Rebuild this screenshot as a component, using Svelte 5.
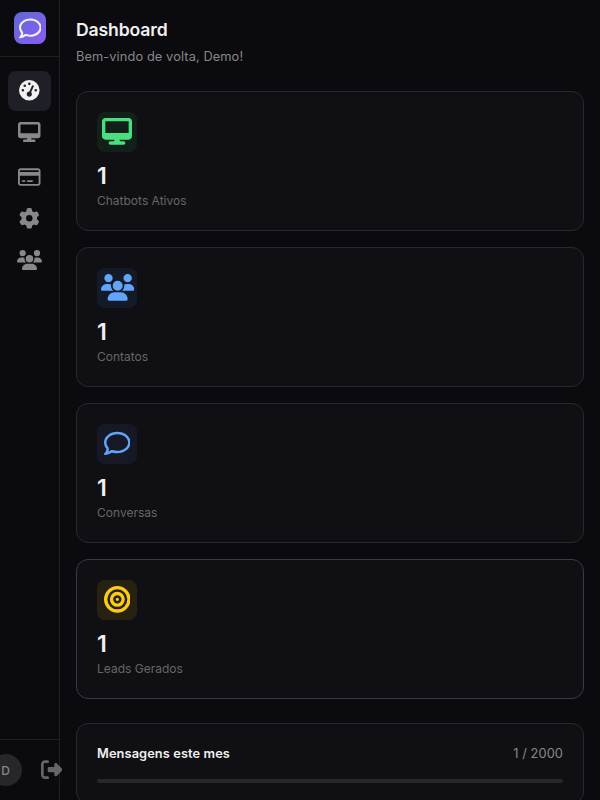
<script>
  const icons = {
    comment: [512, 'M123.6 391.3c12.9-9.4 29.6-11.8 44.6-6.4c26.5 9.6 56.2 15.1 87.8 15.1c124.7 0 208-80.5 208-160s-83.3-160-208-160S48 160.5 48 240c0 32 12.4 62.8 35.7 89.2c8.6 9.7 12.8 22.5 11.8 35.5c-1.4 18.1-5.7 34.7-11.3 49.4c17-7.9 31.1-16.7 39.4-22.7zM21.2 431.9c1.8-2.7 3.5-5.4 5.1-8.1c10-16.6 19.5-38.4 21.4-62.9C17.7 326.8 0 285.1 0 240C0 125.1 114.6 32 256 32s256 93.1 256 208s-114.6 208-256 208c-37.1 0-72.3-6.4-104.1-17.9c-11.9 8.7-31.3 20.6-54.3 30.6c-15.1 6.6-32.3 12.6-50.1 16.1c-.8 .2-1.6 .3-2.4 .5c-4.4 .8-8.7 1.5-13.2 1.9c-.2 0-.5 .1-.7 .1c-5.1 .5-10.2 .8-15.3 .8c-6.5 0-12.3-3.9-14.8-9.9c-2.5-6-1.1-12.8 3.4-17.4c4.1-4.2 7.8-8.7 11.3-13.5c1.7-2.3 3.3-4.6 4.8-6.9l.3-.5z'],
    gauge: [512, 'M0 256a256 256 0 1 1 512 0A256 256 0 1 1 0 256zM288 96a32 32 0 1 0 -64 0 32 32 0 1 0 64 0zM256 416c35.3 0 64-28.7 64-64c0-17.4-6.9-33.1-18.1-44.6L366 161.7c5.3-12.1-.2-26.3-12.3-31.6s-26.3 .2-31.6 12.3L257.9 288c-.6 0-1.3 0-1.9 0c-35.3 0-64 28.7-64 64s28.7 64 64 64zM176 144a32 32 0 1 0 -64 0 32 32 0 1 0 64 0zM96 288a32 32 0 1 0 0-64 32 32 0 1 0 0 64zm352-32a32 32 0 1 0 -64 0 32 32 0 1 0 64 0z'],
    desktop: [576, 'M64 0C28.7 0 0 28.7 0 64V352c0 35.3 28.7 64 64 64H240l-10.7 32H160c-17.7 0-32 14.3-32 32s14.3 32 32 32H416c17.7 0 32-14.3 32-32s-14.3-32-32-32H346.7L336 416H512c35.3 0 64-28.7 64-64V64c0-35.3-28.7-64-64-64H64zM512 64V288H64V64H512z'],
    card: [576, 'M512 80c8.8 0 16 7.2 16 16v32H48V96c0-8.8 7.2-16 16-16H512zm16 144V416c0 8.8-7.2 16-16 16H64c-8.8 0-16-7.2-16-16V224H528zM64 32C28.7 32 0 60.7 0 96V416c0 35.3 28.7 64 64 64H512c35.3 0 64-28.7 64-64V96c0-35.3-28.7-64-64-64H64zm56 304c-13.3 0-24 10.7-24 24s10.7 24 24 24h48c13.3 0 24-10.7 24-24s-10.7-24-24-24H120zm128 0c-13.3 0-24 10.7-24 24s10.7 24 24 24H360c13.3 0 24-10.7 24-24s-10.7-24-24-24H248z'],
    gear: [512, 'M495.9 166.6c3.2 8.7 .5 18.4-6.4 24.6l-43.3 39.4c1.1 8.3 1.7 16.8 1.7 25.4s-.6 17.1-1.7 25.4l43.3 39.4c6.9 6.2 9.6 15.9 6.4 24.6c-4.4 11.9-9.7 23.3-15.8 34.3l-4.7 8.1c-6.6 11-14 21.4-22.1 31.2c-5.9 7.2-15.7 9.6-24.5 6.8l-55.7-17.7c-13.4 10.3-28.2 18.9-44 25.4l-12.5 57.1c-2 9.1-9 16.3-18.2 17.8c-13.8 2.3-28 3.5-42.5 3.5s-28.7-1.2-42.5-3.5c-9.2-1.5-16.2-8.7-18.2-17.8l-12.5-57.1c-15.8-6.5-30.6-15.1-44-25.4L83.1 425.9c-8.8 2.8-18.6 .3-24.5-6.8c-8.1-9.8-15.5-20.2-22.1-31.2l-4.7-8.1c-6.1-11-11.4-22.4-15.8-34.3c-3.2-8.7-.5-18.4 6.4-24.6l43.3-39.4C64.6 273.1 64 264.6 64 256s.6-17.1 1.7-25.4L22.4 191.2c-6.9-6.2-9.6-15.9-6.4-24.6c4.4-11.9 9.7-23.3 15.8-34.3l4.7-8.1c6.6-11 14-21.4 22.1-31.2c5.9-7.2 15.7-9.6 24.5-6.8l55.7 17.7c13.4-10.3 28.2-18.9 44-25.4l12.5-57.1c2-9.1 9-16.3 18.2-17.8C227.3 1.2 241.5 0 256 0s28.7 1.2 42.5 3.5c9.2 1.5 16.2 8.7 18.2 17.8l12.5 57.1c15.8 6.5 30.6 15.1 44 25.4l55.7-17.7c8.8-2.8 18.6-.3 24.5 6.8c8.1 9.8 15.5 20.2 22.1 31.2l4.7 8.1c6.1 11 11.4 22.4 15.8 34.3zM256 336a80 80 0 1 0 0-160 80 80 0 1 0 0 160z'],
    users: [640, 'M144 0a80 80 0 1 1 0 160A80 80 0 1 1 144 0zM512 0a80 80 0 1 1 0 160A80 80 0 1 1 512 0zM0 298.7C0 239.8 47.8 192 106.7 192h42.7c15.9 0 31 3.5 44.6 9.7c-1.3 7.2-1.9 14.7-1.9 22.3c0 38.2 16.8 72.5 43.3 96c-.2 0-.4 0-.7 0H21.3C9.6 320 0 310.4 0 298.7zM405.3 320c-.2 0-.4 0-.7 0c26.6-23.5 43.3-57.8 43.3-96c0-7.6-.7-15-1.9-22.3c13.6-6.3 28.7-9.7 44.6-9.7h42.7C592.2 192 640 239.8 640 298.7c0 11.8-9.6 21.3-21.3 21.3H405.3zM224 224a96 96 0 1 1 192 0 96 96 0 1 1 -192 0zM128 485.3C128 411.7 187.7 352 261.3 352H378.7C452.3 352 512 411.7 512 485.3c0 14.7-11.9 26.7-26.7 26.7H154.7c-14.7 0-26.7-11.9-26.7-26.7z'],
    bullseye: [512, 'M448 256A192 192 0 1 0 64 256a192 192 0 1 0 384 0zM0 256a256 256 0 1 1 512 0A256 256 0 1 1 0 256zm256 80a80 80 0 1 0 0-160 80 80 0 1 0 0 160zm0-224a144 144 0 1 1 0 288 144 144 0 1 1 0-288zM224 256a32 32 0 1 1 64 0 32 32 0 1 1 -64 0z'],
    logout: [512, 'M377.9 105.9L500.7 228.7c7.2 7.2 11.3 17.1 11.3 27.3s-4.1 20.1-11.3 27.3L377.9 406.1c-6.4 6.4-15 9.9-24 9.9c-18.7 0-33.9-15.2-33.9-33.9l0-62.1-128 0c-17.7 0-32-14.3-32-32l0-64c0-17.7 14.3-32 32-32l128 0 0-62.1c0-18.7 15.2-33.9 33.9-33.9c9 0 17.6 3.6 24 9.9zM160 96L96 96c-17.7 0-32 14.3-32 32l0 256c0 17.7 14.3 32 32 32l64 0c17.7 0 32 14.3 32 32s-14.3 32-32 32l-64 0c-53 0-96-43-96-96L0 128C0 75 43 32 96 32l64 0c17.7 0 32 14.3 32 32s-14.3 32-32 32z']
  };

  const nav = ['gauge', 'desktop', 'card', 'gear', 'users'];
  const stats = [
    { icon: 'desktop', tone: 'green', value: 1, label: 'Chatbots Ativos' },
    { icon: 'users', tone: 'blue', value: 1, label: 'Contatos' },
    { icon: 'comment', tone: 'indigo', value: 1, label: 'Conversas' },
    { icon: 'bullseye', tone: 'yellow', value: 1, label: 'Leads Gerados' }
  ];
</script>

{#snippet icon(name, size)}
  <svg
    viewBox="0 0 {icons[name][0]} 512"
    width={(icons[name][0] / 512) * size}
    height={size}
    fill="currentColor"
    aria-hidden="true"
  >
    <path fill-rule="evenodd" d={icons[name][1]} />
  </svg>
{/snippet}

<div class="app">
  <aside>
    <div class="brand"><div class="logo">{@render icon('comment', 22.67)}</div></div>
    <nav>
      {#each nav as name, i}
        <button class="item {name}" class:active={i === 0}>{@render icon(name, name === 'gauge' || name === 'gear' ? 20.6 : 20)}</button>
      {/each}
    </nav>
    <div class="account">
      <div class="avatar">D</div>
      <button class="logout">{@render icon('logout', 21.33)}</button>
    </div>
  </aside>
  <main>
    <h1>Dashboard</h1>
    <p class="welcome">Bem-vindo de volta, Demo!</p>
    <section class="stats">
      {#each stats as s}
        <article class="stat {s.tone}">
          <div class="tile">{@render icon(s.icon, 26.67)}</div>
          <div class="value">{s.value}</div>
          <div class="label">{s.label}</div>
        </article>
      {/each}
    </section>
    <section class="usage">
      <div class="row"><strong>Mensagens este mes</strong><span>1 / 2000</span></div>
      <div class="bar"></div>
    </section>
  </main>
</div>

<style>
  :global(body) {
    background: #0a0a0f;
  }
  .app {
    display: flex;
    height: 800px;
    overflow: hidden;
    background: #0a0a0f;
    color: #f0f0f0;
    font-family: Inter, 'Liberation Sans', sans-serif;
    box-sizing: border-box;
  }
  .app * {
    box-sizing: border-box;
  }
  svg {
    display: block;
    flex: none;
  }
  button {
    border: 0;
    padding: 0;
    background: none;
    color: inherit;
    font: inherit;
  }
  aside {
    display: flex;
    flex: none;
    flex-direction: column;
    width: 60px;
    border-right: 1px solid #1f1f24;
  }
  .brand {
    display: flex;
    flex: none;
    justify-content: center;
    height: 57px;
    padding-top: 12px;
    border-bottom: 1px solid #1f1f24;
  }
  .logo {
    display: flex;
    align-items: center;
    justify-content: center;
    width: 32px;
    height: 32px;
    padding-left: 1px;
    border-radius: 8px;
    background: linear-gradient(135deg, #5e6ad2, #8b5cf6);
    color: #f0f0f0;
  }
  nav {
    display: flex;
    flex: 1;
    flex-direction: column;
    gap: 2px;
    padding: 14px 8px;
  }
  .item {
    display: flex;
    align-items: center;
    justify-content: center;
    height: 40px;
    padding-bottom: 2px;
    border-radius: 8px;
    color: #888;
  }
  .item.gauge {
    padding-bottom: 1px;
  }
  .item.gear {
    padding: 0 1px 1px 0;
  }
  .item.card {
    height: 42px;
    padding: 1px 0 0;
  }
  .active {
    background: #1f1f27;
    color: #f0f0f0;
  }
  .account {
    display: flex;
    flex: none;
    align-items: center;
    justify-content: center;
    gap: 10px;
    height: 61px;
    border-top: 1px solid #1f1f24;
  }
  .avatar {
    display: flex;
    flex: none;
    align-items: center;
    justify-content: center;
    width: 32px;
    height: 32px;
    border-radius: 50%;
    background: #27272a;
    color: #888;
    font-size: 12px;
    font-weight: 500;
  }
  .logout {
    display: flex;
    flex: none;
    justify-content: center;
    width: 38px;
    padding: 0 0 1px 2px;
    color: #666;
  }
  main {
    flex: 1;
    min-width: 0;
    padding: 18px 16px 0;
  }
  h1 {
    margin: 0;
    font-size: 17.6px;
    line-height: 24px;
    font-weight: 600;
    letter-spacing: -0.13px;
  }
  .welcome {
    margin: 5px 0 0;
    color: #888;
    font-size: 12.8px;
    line-height: 20px;
    letter-spacing: 0.1px;
  }
  .stats {
    display: grid;
    gap: 16px;
    margin-top: 24px;
  }
  .stat {
    height: 140px;
    padding: 20px;
    border: 1px solid #28282f;
    border-radius: 12px;
    background: #101014;
  }
  .stat:last-child {
    border-color: #3a3a45;
  }
  .tile {
    display: flex;
    align-items: center;
    justify-content: center;
    width: 40px;
    height: 40px;
    padding-bottom: 1px;
    border-radius: 8px;
  }
  .blue .tile {
    padding-left: 1px;
  }
  .green .tile {
    background: #11211a;
    color: #4ade80;
  }
  .blue .tile {
    background: #131b29;
    color: #60a5fa;
  }
  .indigo .tile {
    background: #161825;
    color: #60a5fa;
  }
  .yellow .tile {
    background: #272112;
    color: #facc15;
  }
  .value {
    margin-top: 12px;
    font-size: 23.2px;
    line-height: 24px;
    font-weight: 600;
  }
  .label {
    margin-top: 4px;
    color: #666;
    font-size: 12px;
    line-height: 18px;
  }
  .usage {
    height: 81px;
    margin-top: 24px;
    padding: 20px;
    border: 1px solid #28282f;
    border-radius: 12px;
    background: #101014;
  }
  .row {
    display: flex;
    justify-content: space-between;
    font-size: 12.8px;
    line-height: 20px;
    letter-spacing: 0.1px;
  }
  .row strong {
    font-weight: 600;
  }
  .row span {
    color: #888;
  }
  .bar {
    height: 4px;
    margin-top: 15px;
    border-radius: 2px;
    background: #27272a;
  }
</style>
